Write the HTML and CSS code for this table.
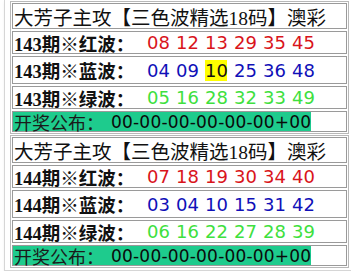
FILE: index.html
```html
<!DOCTYPE html>
<html lang="zh">
<head>
<meta charset="utf-8">
<title>三色波精选18码</title>
<link rel="stylesheet" href="styles.css">
</head>
<body>
<div class="wrap">
  <div class="panel">
    <div class="row title">大芳子主攻【三色波精选18码】澳彩</div>
    <div class="row nums">
      <span class="label"><i>143</i>期※红波：</span>
      <span class="balls red"><b>08</b><b>12</b><b>13</b><b>29</b><b>35</b><b>45</b></span>
    </div>
    <div class="row nums tall">
      <span class="label"><i>143</i>期※蓝波：</span>
      <span class="balls blue"><b>04</b><b>09</b><b class="hit">10</b><b>25</b><b>36</b><b>48</b></span>
    </div>
    <div class="row nums">
      <span class="label"><i>143</i>期※绿波：</span>
      <span class="balls green"><b>05</b><b>16</b><b>28</b><b>32</b><b>33</b><b>49</b></span>
    </div>
    <div class="row result"><span class="hl"><span class="rlabel">开奖公布：</span><span class="code">00-00-00-00-00-00+00</span></span></div>
  </div>
  <div class="panel">
    <div class="row title">大芳子主攻【三色波精选18码】澳彩</div>
    <div class="row nums">
      <span class="label"><i>144</i>期※红波：</span>
      <span class="balls red"><b>07</b><b>18</b><b>19</b><b>30</b><b>34</b><b>40</b></span>
    </div>
    <div class="row nums tall">
      <span class="label"><i>144</i>期※蓝波：</span>
      <span class="balls blue"><b>03</b><b>04</b><b>10</b><b>15</b><b>31</b><b>42</b></span>
    </div>
    <div class="row nums">
      <span class="label"><i>144</i>期※绿波：</span>
      <span class="balls green"><b>06</b><b>16</b><b>22</b><b>27</b><b>28</b><b>39</b></span>
    </div>
    <div class="row result"><span class="hl"><span class="rlabel">开奖公布：</span><span class="code">00-00-00-00-00-00+00</span></span></div>
  </div>
</div>
</body>
</html>
```
FILE: styles.css
```css
html, body {
  margin: 0;
  padding: 0;
  background: #ffffff;
}
body {
  font-family: "Liberation Serif", "Noto Sans CJK SC", serif;
  color: #111;
}
.wrap {
  width: 339px;
  margin: 0 0 0 4px;
  border: 1px solid #d6d6d6;
  border-top: none;
  box-shadow: 1px 2px 3px rgba(0,0,0,0.12);
  padding: 1px 5px 2px 5px;
  display: flex;
  flex-direction: column;
  gap: 1px;
}
.panel {
  border: 1px solid #b8b8b8;
  padding: 1px;
  display: flex;
  flex-direction: column;
  gap: 2px;
}
.row {
  border: 1px solid #9a9a9a;
  display: flex;
  align-items: center;
  white-space: nowrap;
}
.title {
  height: 24px;
  font-size: 19.5px;
  padding-left: 1px;
  color: #111;
}
.nums {
  height: 21px;
}
.nums.tall {
  height: 26px;
}
.label {
  width: 133px;
  font-size: 18.5px;
  font-weight: bold;
  padding-left: 1px;
}
.label i {
  font-style: normal;
}
.balls {
  display: flex;
  gap: 7px;
  font-family: "DejaVu Sans", "Liberation Sans", sans-serif;
  font-size: 18px;
}
.balls b {
  font-weight: normal;
  width: 22px;
  text-align: center;
}
.red { color: #d9141b; }
.blue { color: #1010b8; }
.green { color: #3ee03e; }
.hit {
  background: #ffff00;
  color: #111;
}
.result {
  height: 19px;
  align-items: stretch;
}
.hl {
  background: #1ecb8d;
  display: flex;
  align-items: center;
}
.rlabel {
  font-size: 18px;
  font-weight: normal;
  color: #1a1a1a;
  padding-left: 1px;
  width: 97px;
}
.code {
  font-family: "DejaVu Sans", "Liberation Sans", sans-serif;
  font-size: 17px;
  letter-spacing: 0.2px;
  color: #0a0a0a;
}
```
